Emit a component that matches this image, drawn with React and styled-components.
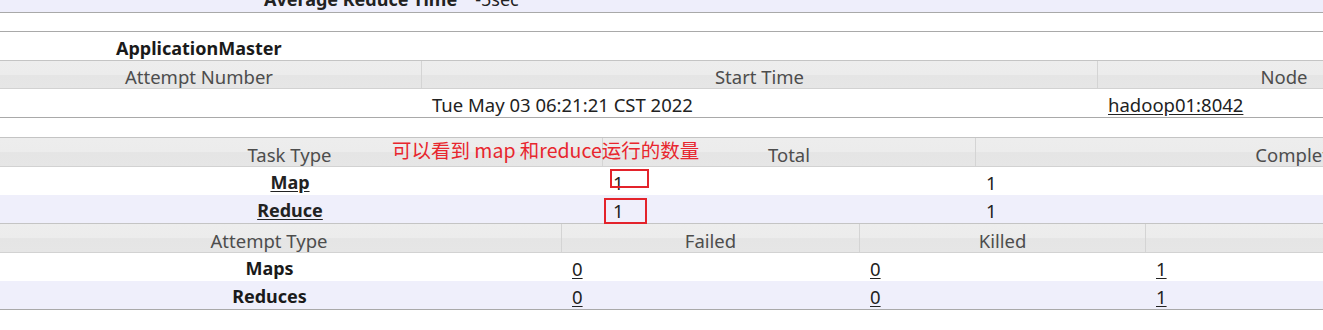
import React from 'react'
import styled, { createGlobalStyle } from 'styled-components'

const GlobalStyle = createGlobalStyle`
  html, body {
    margin: 0;
    padding: 0;
    background: #fff;
    overflow: hidden;
  }
  body {
    font-family: "Noto Sans", "Open Sans", sans-serif;
    color: #222;
  }
`

const Page = styled.div`
  width: 1323px;
  height: 330px;
  overflow: hidden;
`

const InfoStrip = styled.div`
  height: 12px;
  background: #eeeefb;
  border-bottom: 1px solid #a9a9a9;
  overflow: hidden;
  display: flex;
  gap: 18px;
  padding-left: 264px;
`

const InfoText = styled.span`
  margin-top: -15px;
  line-height: 28px;
  font-size: 18px;
  font-weight: ${(p) => (p.$bold ? 700 : 400)};
  color: #222;
`

const BlankRow = styled.div`
  height: 18px;
  border-bottom: 1px solid #a9a9a9;
`

const SectionTitle = styled.div`
  height: 28px;
  display: flex;
  align-items: center;
  padding: 3px 0 0 116px;
  box-sizing: border-box;
  font-weight: 700;
  font-size: 18px;
  color: #1a1a1a;
`

const Table = styled.div`
  position: relative;
  margin-left: -23px;
  width: 1800px;
  border-bottom: 1px solid #a9a9a9;
`

const HeadRow = styled.div`
  display: grid;
  grid-template-columns: ${(p) => p.$cols};
  height: ${(p) => p.$h || 30}px;
  box-sizing: border-box;
  border-top: 1px solid #c4c4c4;
  border-bottom: 1px solid #d2d2d2;
  background: linear-gradient(#ededed 0%, #ececec 50%, #e5e5e5 52%, #e6e6e6 100%);
`

const HeadCell = styled.div`
  display: flex;
  align-items: center;
  justify-content: center;
  padding-top: 4px;
  font-size: 18.5px;
  color: #4d4d4d;
  border-right: 1px solid #d4d4d4;
  white-space: nowrap;
  overflow: hidden;
  &:last-child {
    border-right: none;
  }
`

const DataRow = styled.div`
  display: grid;
  grid-template-columns: ${(p) => p.$cols};
  height: 28px;
  background: ${(p) => (p.$alt ? '#efeffb' : '#fff')};
`

const Cell = styled.div`
  display: flex;
  align-items: center;
  padding: 2px 10px 0;
  font-size: 18.5px;
  white-space: nowrap;
  overflow: hidden;
  ${(p) =>
    p.$label &&
    `
    justify-content: center;
    padding: 2px 0 0;
    font-size: 18px;
    font-weight: 700;
    color: #1a1a1a;
  `}
`

const Anchor = styled.a`
  color: #222;
  text-decoration: underline;
  text-underline-offset: 2px;
`

const Gap = styled.div`
  height: 19px;
`

const Note = styled.div`
  position: absolute;
  left: 415px;
  top: 0;
  line-height: 26px;
  font-size: 19.5px;
  color: #e8262e;
  font-family: "Noto Sans CJK SC", "Noto Sans", sans-serif;
  white-space: nowrap;
`

const Mark = styled.div`
  position: absolute;
  border: 2px solid #e3232b;
  box-sizing: border-box;
`

const amCols = '445px 676px 372px'
const taskCols = '626px 373px 654px'
const attemptCols = '585px 298px 286px 600px'

export default function App() {
  return (
    <Page>
      <GlobalStyle />
      <InfoStrip>
        <InfoText $bold>Average Reduce Time</InfoText>
        <InfoText>-5sec</InfoText>
      </InfoStrip>
      <BlankRow />
      <SectionTitle>ApplicationMaster</SectionTitle>
      <Table>
        <HeadRow $cols={amCols} $h={29}>
          <HeadCell>Attempt Number</HeadCell>
          <HeadCell>Start Time</HeadCell>
          <HeadCell>Node</HeadCell>
        </HeadRow>
        <DataRow $cols={amCols}>
          <Cell></Cell>
          <Cell>Tue May 03 06:21:21 CST 2022</Cell>
          <Cell>
            <Anchor href="#">hadoop01:8042</Anchor>
          </Cell>
        </DataRow>
      </Table>
      <Gap />
      <Table>
        <HeadRow $cols={taskCols}>
          <HeadCell>Task Type</HeadCell>
          <HeadCell>Total</HeadCell>
          <HeadCell>Completed</HeadCell>
        </HeadRow>
        <DataRow $cols={taskCols}>
          <Cell $label>
            <Anchor href="#">Map</Anchor>
          </Cell>
          <Cell>1</Cell>
          <Cell>1</Cell>
        </DataRow>
        <DataRow $cols={taskCols} $alt>
          <Cell $label>
            <Anchor href="#">Reduce</Anchor>
          </Cell>
          <Cell>1</Cell>
          <Cell>1</Cell>
        </DataRow>
        <HeadRow $cols={attemptCols}>
          <HeadCell>Attempt Type</HeadCell>
          <HeadCell>Failed</HeadCell>
          <HeadCell>Killed</HeadCell>
          <HeadCell>Successful</HeadCell>
        </HeadRow>
        <DataRow $cols={attemptCols}>
          <Cell $label>Maps</Cell>
          <Cell>
            <Anchor href="#">0</Anchor>
          </Cell>
          <Cell>
            <Anchor href="#">0</Anchor>
          </Cell>
          <Cell>
            <Anchor href="#">1</Anchor>
          </Cell>
        </DataRow>
        <DataRow $cols={attemptCols} $alt>
          <Cell $label>Reduces</Cell>
          <Cell>
            <Anchor href="#">0</Anchor>
          </Cell>
          <Cell>
            <Anchor href="#">0</Anchor>
          </Cell>
          <Cell>
            <Anchor href="#">1</Anchor>
          </Cell>
        </DataRow>
        <Note>可以看到 map 和reduce运行的数量</Note>
        <Mark style={{ left: 633, top: 32, width: 39, height: 19 }} />
        <Mark style={{ left: 627, top: 61, width: 43, height: 26 }} />
      </Table>
    </Page>
  )
}
